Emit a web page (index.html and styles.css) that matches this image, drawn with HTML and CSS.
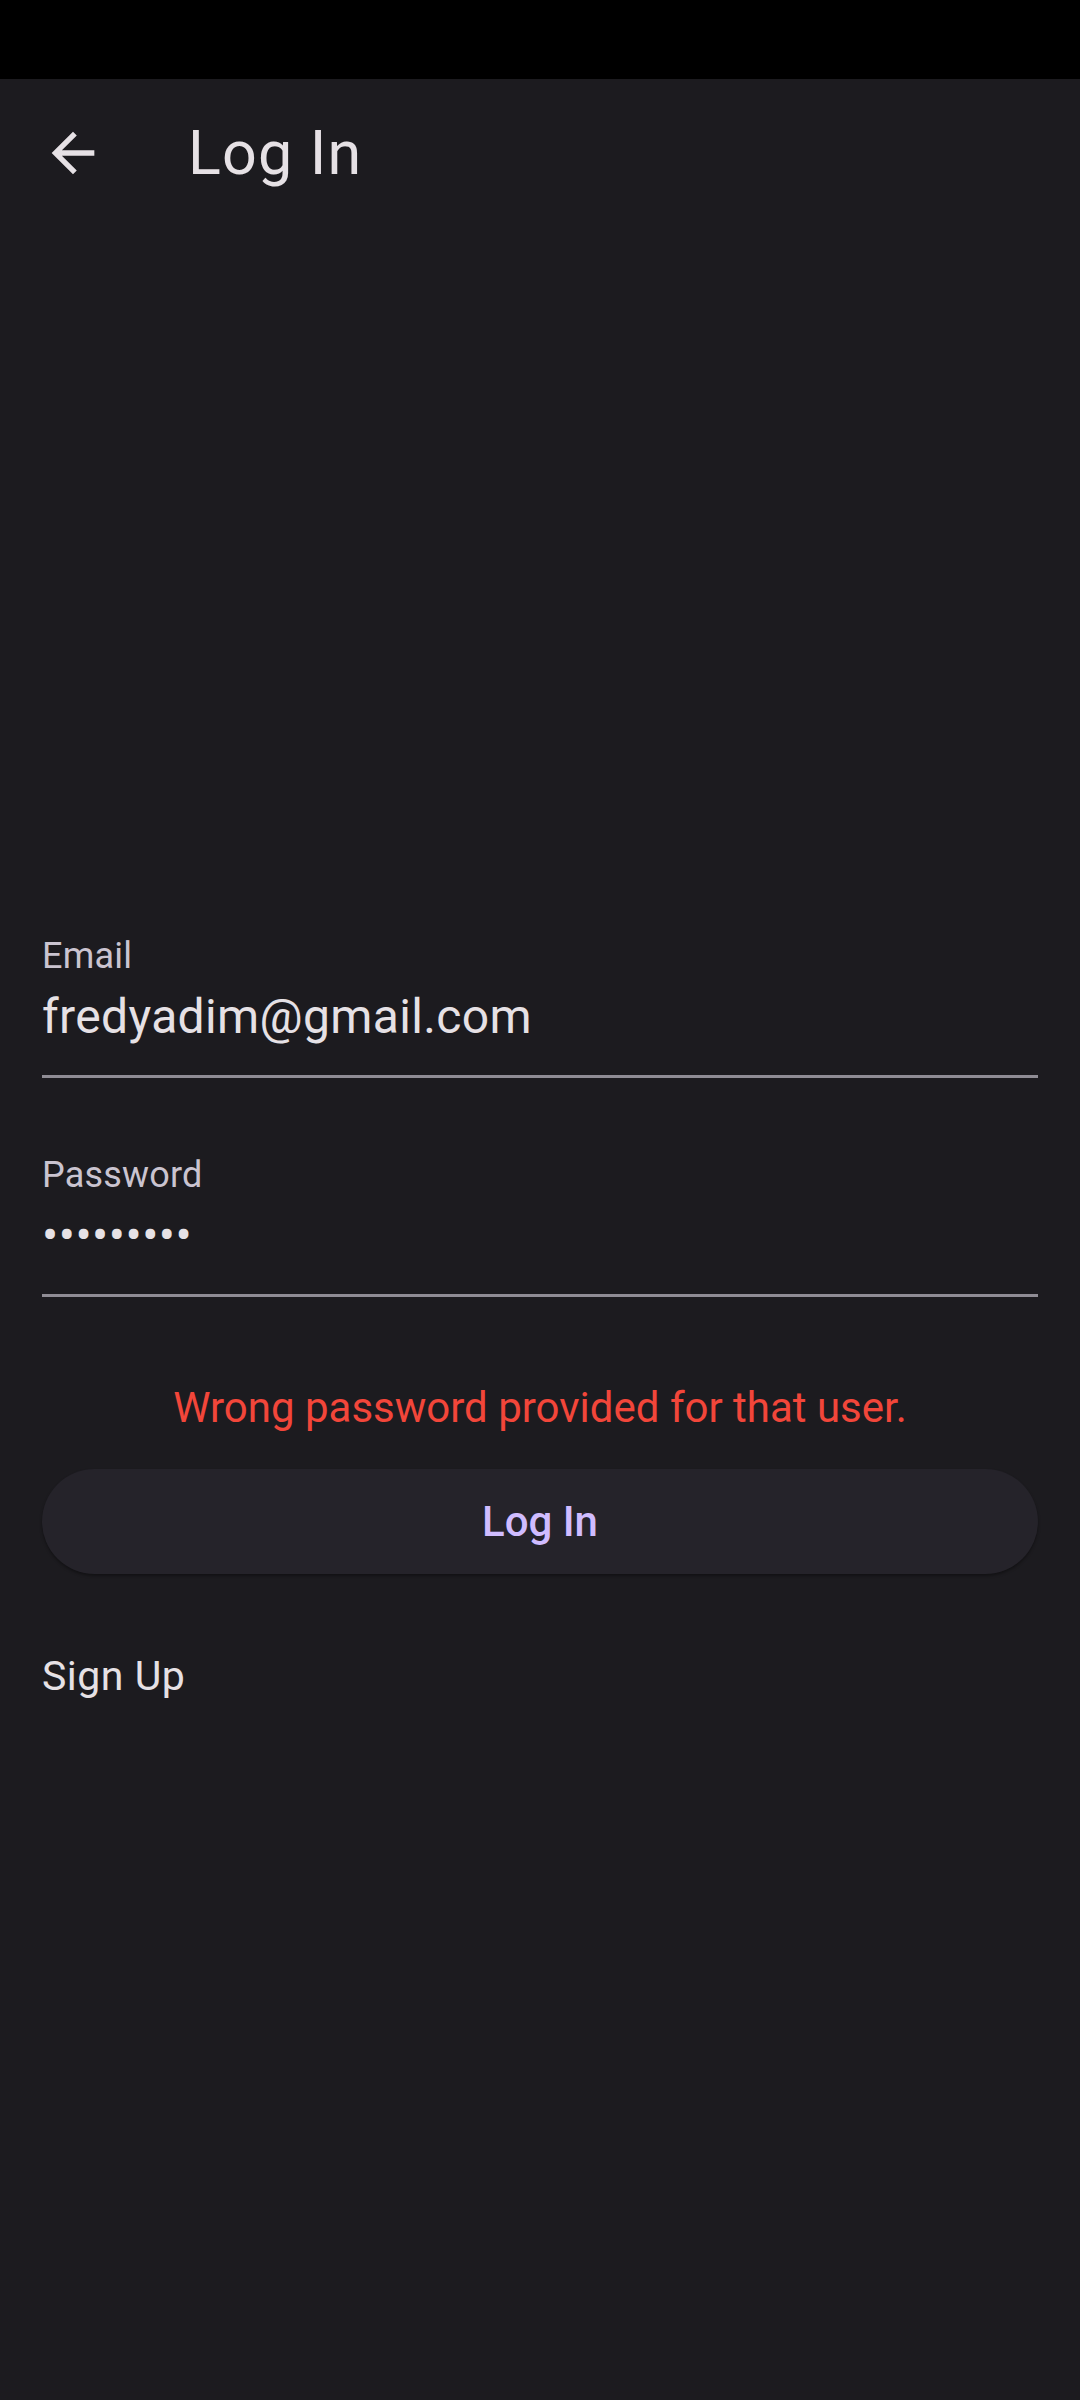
FILE: index.html
```html
<!DOCTYPE html>
<html lang="en">
<head>
<meta charset="utf-8">
<title>Log In</title>
<link rel="stylesheet" href="styles.css">
</head>
<body>
<div class="screen">
  <div class="status-bar"></div>
  <header class="app-bar">
    <svg class="back-icon" viewBox="0 0 24 24" width="64" height="64" aria-label="Back">
      <path d="M20 11H7.83l5.59-5.59L12 4l-8 8 8 8 1.41-1.41L7.83 13H20v-2z" fill="#e6e1e5"/>
    </svg>
    <h1 class="title">Log In</h1>
  </header>
  <main class="form">
    <div class="field">
      <div class="field-label">Email</div>
      <div class="field-value">fredyadim@gmail.com</div>
    </div>
    <div class="field field-password">
      <div class="field-label">Password</div>
      <div class="field-value dots">•••••••••</div>
    </div>
    <p class="error">Wrong password provided for that user.</p>
    <button class="login-btn">Log In</button>
    <a class="signup">Sign Up</a>
  </main>
</div>
</body>
</html>
```
FILE: styles.css
```css
* { box-sizing: border-box; }
html, body {
  margin: 0;
  padding: 0;
  background: #1c1b1f;
}
body {
  font-family: Roboto, "Noto Sans", sans-serif;
  color: #e6e1e5;
}
.screen {
  width: 1080px;
  height: 2400px;
  background: #1c1b1f;
  display: flex;
  flex-direction: column;
}
.status-bar {
  height: 79px;
  background: #000;
  flex: none;
}
.app-bar {
  height: 147px;
  display: flex;
  align-items: center;
  padding-left: 41px;
  flex: none;
}
.back-icon {
  display: block;
  flex: none;
}
.title {
  margin: 0 0 0 83px;
  font-size: 61px;
  line-height: 70px;
  letter-spacing: 1.2px;
  font-weight: 400;
  color: #e6e1e5;
}
.form {
  padding: 708px 42px 0;
  display: flex;
  flex-direction: column;
}
.field {
  border-bottom: 3px solid #8f8c94;
  padding-bottom: 30px;
}
.field-password {
  margin-top: 75px;
}
.field-label {
  font-size: 36px;
  line-height: 44px;
  letter-spacing: 0.2px;
  color: #cac4d0;
}
.field-value {
  margin-top: 11px;
  font-size: 48px;
  line-height: 56px;
  letter-spacing: 0.35px;
  color: #e6e1e5;
}
.dots {
  letter-spacing: 0.5px;
}
.error {
  margin: 86px 0 0;
  font-size: 42px;
  line-height: 50px;
  color: #f2463a;
  text-align: center;
}
.login-btn {
  margin-top: 36px;
  height: 105px;
  border: none;
  border-radius: 53px;
  background: #25232a;
  box-shadow: 0 2px 3px rgba(0, 0, 0, 0.35);
  color: #d0bcff;
  font-family: Roboto, "Noto Sans", sans-serif;
  font-size: 42px;
  font-weight: 500;
  padding: 0;
}
.signup {
  margin-top: 78px;
  font-size: 41px;
  line-height: 48px;
  letter-spacing: 0.5px;
  color: #e6e1e5;
}
```
